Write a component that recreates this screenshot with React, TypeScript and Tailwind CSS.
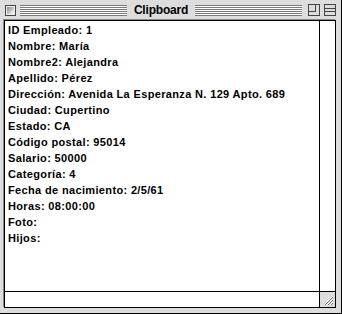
import React from 'react';

const lines = [
  'ID Empleado: 1',
  'Nombre: María',
  'Nombre2: Alejandra',
  'Apellido: Pérez',
  'Dirección: Avenida La Esperanza N. 129 Apto. 689',
  'Ciudad: Cupertino',
  'Estado: CA',
  'Código postal: 95014',
  'Salario: 50000',
  'Categoría: 4',
  'Fecha de nacimiento: 2/5/61',
  'Horas: 08:00:00',
  'Foto:',
  'Hijos:',
];

const stripes =
  'h-[11px] flex-1 bg-[repeating-linear-gradient(to_bottom,#7a7a7a_0px,#7a7a7a_1px,#ffffff_1px,#ffffff_2px)]';

function CloseBox() {
  return (
    <div className="w-[11px] h-[11px] border border-[#444] bg-[#eeeeee] p-px">
      <div className="w-full h-full bg-[linear-gradient(135deg,#888_0%,#bbb_45%,#fff_100%)]" />
    </div>
  );
}

function ZoomBox() {
  return (
    <div className="relative w-[12px] h-[12px] border border-[#444] bg-[#dddddd]">
      <div className="absolute left-0 top-0 w-[7px] h-[7px] border-r border-b border-[#444]" />
    </div>
  );
}

function CollapseBox() {
  return (
    <div className="flex flex-col justify-center gap-[2px] w-[12px] h-[12px] border border-[#444] bg-[#dddddd]">
      <div className="h-px bg-[#444]" />
      <div className="h-px bg-[#444]" />
    </div>
  );
}

function GrowBox() {
  return (
    <div className="w-[15px] h-[15px] bg-[#dddddd]">
      <svg width="15" height="15" viewBox="0 0 15 15">
        {[0, 3, 6].map((o) => (
          <g key={o}>
            <line x1={4 + o} y1={13} x2={13} y2={4 + o} stroke="#fff" strokeWidth="1" />
            <line x1={5 + o} y1={13} x2={13} y2={5 + o} stroke="#777" strokeWidth="1" />
          </g>
        ))}
      </svg>
    </div>
  );
}

export default function App() {
  return (
    <div className="w-[342px] h-[314px] bg-[#dddddd] border-r border-b border-black flex flex-col font-['Liberation_Sans',Arial,sans-serif]">
      {/* title bar */}
      <div className="h-[20px] flex items-center pl-[5px] pr-[5px] gap-[4px]">
        <CloseBox />
        <div className={stripes} />
        <div className="px-[3px] text-[12px] font-bold leading-none text-black tracking-[-0.2px]">
          Clipboard
        </div>
        <div className={stripes} />
        <div className="flex gap-[4px] ml-[2px]">
          <ZoomBox />
          <CollapseBox />
        </div>
      </div>

      {/* content frame */}
      <div className="ml-[4px] mr-[5px] h-[288px] border border-black flex flex-col bg-white shadow-[-1px_-1px_0_#888]">
        <div className="flex-1 flex min-h-0">
          <div className="flex-1 pl-[3px] pt-[1px] text-[11px] font-bold leading-[16px] tracking-[0.35px] text-black">
            {lines.map((l) => (
              <div key={l}>{l}</div>
            ))}
          </div>
          <div className="w-[16px] border-l border-black bg-white" />
        </div>
        <div className="h-[16px] border-t border-black flex">
          <div className="flex-1 bg-white" />
          <div className="border-l border-black">
            <GrowBox />
          </div>
        </div>
      </div>
    </div>
  );
}
